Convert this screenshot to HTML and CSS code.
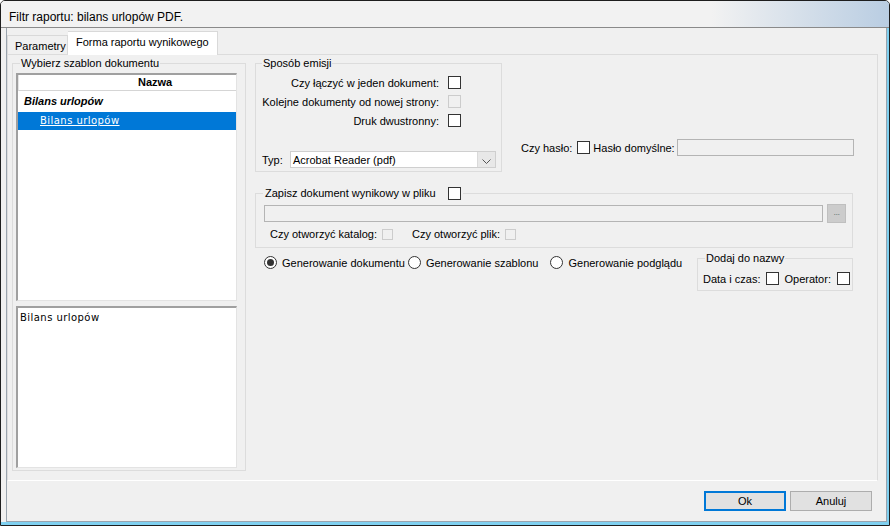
FILE: index.html
```html
<!DOCTYPE html>
<html lang="pl">
<head>
<meta charset="utf-8">
<title>Filtr raportu</title>
<link rel="stylesheet" href="styles.css">
</head>
<body>
<div class="window">
  <div class="titlebar">Filtr raportu: bilans urlopów PDF.</div>
  <div class="frame">
    <div class="client">
      <div class="tabs">
        <div class="tab">Parametry</div>
        <div class="tab active">Forma raportu wynikowego</div>
      </div>
      <div class="page">
        <fieldset class="group left-group">
          <legend>Wybierz szablon dokumentu</legend>
          <div class="listview">
            <div class="lv-header">Nazwa</div>
            <div class="lv-row lv-group">Bilans urlopów</div>
            <div class="lv-row lv-selected"><span>Bilans urlopów</span></div>
          </div>
          <div class="memo">Bilans urlopów</div>
        </fieldset>
        <div class="right-col">
          <div class="row-top">
            <fieldset class="group emisja">
              <legend>Sposób emisji</legend>
              <div class="chk-row"><span>Czy łączyć w jeden dokument:</span><span class="chk"></span></div>
              <div class="chk-row"><span>Kolejne dokumenty od nowej strony:</span><span class="chk disabled"></span></div>
              <div class="chk-row"><span>Druk dwustronny:</span><span class="chk"></span></div>
              <div class="typ-row">
                <span class="typ-label">Typ:</span>
                <div class="select">
                  <span class="select-text">Acrobat Reader (pdf)</span>
                  <span class="select-btn"><svg width="9" height="5" viewBox="0 0 9 5"><path d="M0.5 0.5 L4.5 4.5 L8.5 0.5" fill="none" stroke="#555" stroke-width="1"/></svg></span>
                </div>
              </div>
            </fieldset>
            <div class="haslo">
              <span>Czy hasło:</span>
              <span class="chk"></span>
              <span class="haslo-label">Hasło domyślne:</span>
              <span class="textbox haslo-box"></span>
            </div>
          </div>
          <fieldset class="group zapisz">
            <legend><span>Zapisz dokument wynikowy w pliku</span><span class="chk"></span></legend>
            <div class="path-row">
              <span class="textbox path-box"></span>
              <span class="browse">...</span>
            </div>
            <div class="open-row">
              <span>Czy otworzyć katalog:</span><span class="chk small disabled"></span>
              <span class="open-file">Czy otworzyć plik:</span><span class="chk small disabled"></span>
            </div>
          </fieldset>
          <div class="row-bottom">
            <div class="radios">
              <span class="radio checked"></span><span class="radio-label">Generowanie dokumentu</span>
              <span class="radio second"></span><span class="radio-label">Generowanie szablonu</span>
              <span class="radio third"></span><span class="radio-label">Generowanie podglądu</span>
            </div>
            <fieldset class="group dodaj">
              <legend>Dodaj do nazwy</legend>
              <div class="dodaj-row">
                <span>Data i czas:</span><span class="chk"></span>
                <span class="operator">Operator:</span><span class="chk"></span>
              </div>
            </fieldset>
          </div>
        </div>
      </div>
      <div class="footer">
        <button class="btn default">Ok</button>
        <button class="btn">Anuluj</button>
      </div>
    </div>
  </div>
</div>
</body>
</html>
```

FILE: styles.css
```css
* { box-sizing: border-box; }
html, body { margin: 0; padding: 0; background: #ffffff; }
body {
  font-family: "Liberation Sans", Arial, sans-serif;
  font-size: 11px;
  color: #000;
  white-space: nowrap;
}
.window {
  width: 890px;
  height: 526px;
  border: 1px solid #1e1e1e;
  border-radius: 5px 5px 0 0;
  background: #f0f0f0;
  display: flex;
  flex-direction: column;
  overflow: hidden;
}
.titlebar {
  flex: none;
  height: 27px;
  padding: 5px 0 0 8px;
  font-size: 12px;
  line-height: 22px;
  background: linear-gradient(to right, #f2f2f2 0%, #f2f2f2 80%, #b9cde2 100%);
  border-bottom: 1px solid #8a8a8a;
}
.frame {
  flex: 1;
  display: flex;
  padding: 0 2px 3px 5px;
  background: #f0f0f0;
  box-shadow: inset -2px -3px 0 #7fd0f0;
}
.client {
  flex: 1;
  display: flex;
  flex-direction: column;
  border-left: 1px solid #9aa4ae;
  border-right: 1px solid #9aa4ae;
  border-bottom: 1px solid #9aa4ae;
  background: #f0f0f0;
  padding-top: 3px;
}
.tabs {
  display: flex;
  align-items: flex-end;
  height: 23px;
}
.tab {
  width: 61px;
  height: 19px;
  padding: 4px 0 0 7px;
  border: 1px solid #d9d9d9;
  border-bottom: none;
  background: #f0f0f0;
  font-size: 11px;
  line-height: 13px;
}
.tab.active {
  width: 150px;
  height: 24px;
  margin-bottom: -1px;
  padding: 4px 0 0 8px;
  border-left: none;
  background: #ffffff;
  position: relative;
}
.page {
  width: 871px;
  height: 427px;
  border: 1px solid #dcdcdc;
  border-bottom-color: #ffffff;
  display: flex;
  align-items: flex-start;
  padding: 2px 0 0 4px;
}
.group {
  flex: none;
  margin: 0;
  border: 1px solid #dcdcdc;
  padding: 0;
  min-width: 0;
}
.group > legend {
  padding: 0 1px;
  line-height: 13px;
}
.left-group {
  width: 234px;
  height: 414px;
  padding: 3px 8px 0 3px;
}
.left-group > legend { margin-left: 4px; }
.listview {
  height: 228px;
  background: #fff;
  border-top: 2px solid #a0a0a0;
  border-left: 2px solid #a0a0a0;
  border-right: 1px solid #e3e3e3;
  border-bottom: 1px solid #e3e3e3;
}
.lv-header {
  height: 16px;
  border-bottom: 1px solid #d5d5d5;
  border-left: 1px solid #e5e5e5;
  font-weight: bold;
  padding-left: 119px;
  line-height: 15px;
}
.lv-row {
  height: 18px;
  line-height: 18px;
}
.lv-group {
  height: 21px;
  line-height: 21px;
  padding-left: 6px;
  font-weight: bold;
  font-style: italic;
}
.lv-selected {
  background: #0078d7;
  color: #fff;
  padding-left: 22px;
  font-family: "DejaVu Sans", sans-serif;
  font-size: 10px;
  letter-spacing: 0.45px;
}
.lv-selected span { text-decoration: underline; }
.memo {
  margin-top: 5px;
  height: 162px;
  background: #fff;
  border-top: 2px solid #a0a0a0;
  border-left: 2px solid #a0a0a0;
  border-right: 1px solid #e3e3e3;
  border-bottom: 1px solid #e3e3e3;
  padding: 3px 2px;
  font-family: "DejaVu Sans", sans-serif;
  font-size: 10px;
  letter-spacing: 0.45px;
  line-height: 13px;
}
.right-col {
  width: 599px;
  margin-left: 9px;
  display: flex;
  flex-direction: column;
}
.row-top {
  display: flex;
  align-items: flex-end;
}
.emisja {
  width: 247px;
  height: 115px;
  padding: 3px 0 0 6px;
}
.emisja > legend { margin-left: 0; }
.chk-row {
  height: 19px;
  display: flex;
  align-items: center;
  justify-content: flex-end;
  padding-right: 40px;
}
.chk {
  display: inline-block;
  flex: none;
  width: 13px;
  height: 13px;
  border: 1px solid #333;
  background: #fff;
  margin-left: 9px;
}
.chk.disabled {
  border-color: #cccccc;
  background: #f0f0f0;
}
.chk.small {
  width: 11px;
  height: 11px;
  margin-left: 5px;
}
.typ-row {
  margin-top: 21px;
  display: flex;
  align-items: center;
  height: 17px;
}
.typ-label { width: 28px; }
.select {
  width: 206px;
  height: 17px;
  border: 1px solid #cfcfcf;
  background: #fff;
  display: flex;
  align-items: center;
}
.select-text { flex: 1; padding-left: 2px; }
.select-btn {
  width: 18px;
  height: 15px;
  background: #e8e8e8;
  border-left: 1px solid #dadada;
  display: flex;
  align-items: center;
  justify-content: center;
  padding-top: 3px;
}
.haslo {
  display: flex;
  align-items: center;
  margin-left: 19px;
  margin-bottom: 16px;
  height: 17px;
}
.haslo .chk { margin-left: 5px; }
.haslo-label { margin-left: 3px; }
.textbox {
  display: inline-block;
  flex: none;
  height: 17px;
  border: 1px solid #b4b4b4;
  background: #f0f0f0;
}
.haslo-box { width: 177px; margin-left: 2px; }
.zapisz {
  width: 598px;
  height: 62px;
  margin-top: 14px;
  padding: 3px 0 0 8px;
}
.zapisz > legend {
  margin-left: -1px;
  display: flex;
  align-items: center;
  height: 14px;
  padding: 0 2px;
}
.zapisz > legend .chk { margin-left: 12px; }
.path-row {
  display: flex;
  align-items: center;
  height: 20px;
}
.path-box { width: 559px; }
.browse {
  margin-left: 4px;
  width: 19px;
  height: 19px;
  background: #cccccc;
  border: 1px solid #bfbfbf;
  color: #6b7b7b;
  font-size: 9px;
  line-height: 15px;
  text-align: center;
  letter-spacing: -0.5px;
}
.open-row {
  display: flex;
  align-items: center;
  height: 12px;
  margin-top: 5px;
  padding-left: 6px;
}
.open-file { margin-left: 19px; }
.row-bottom {
  display: flex;
  align-items: flex-start;
  margin-top: 4px;
}
.radios {
  display: flex;
  align-items: center;
  margin-top: 4px;
  padding-left: 9px;
  height: 13px;
}
.radio {
  flex: none;
  width: 13px;
  height: 13px;
  border: 1px solid #333;
  border-radius: 50%;
  background: #fff;
  display: flex;
  align-items: center;
  justify-content: center;
}
.radio.second { margin-left: 3px; }
.radio.third { margin-left: 12px; }
.radio.checked::after {
  content: "";
  width: 7px;
  height: 7px;
  border-radius: 50%;
  background: #333;
}
.radio-label { margin-left: 5px; }
.dodaj {
  margin-left: auto;
  margin-right: 1px;
  width: 156px;
  height: 39px;
  padding: 7px 0 0 5px;
}
.dodaj > legend { margin-left: 2px; }
.dodaj-row {
  display: flex;
  align-items: center;
  height: 13px;
}
.dodaj-row .chk { margin-left: 6px; }
.operator { margin-left: 5px; }
.footer {
  display: flex;
  justify-content: flex-end;
  padding: 10px 14px 0 0;
  gap: 4px;
}
.btn {
  width: 82px;
  height: 20px;
  border: 1px solid #adadad;
  background: #e1e1e1;
  font-family: "Liberation Sans", Arial, sans-serif;
  font-size: 11px;
  color: #000;
  padding: 0;
  margin: 0;
}
.btn.default { border: 2px solid #0078d7; }
```
